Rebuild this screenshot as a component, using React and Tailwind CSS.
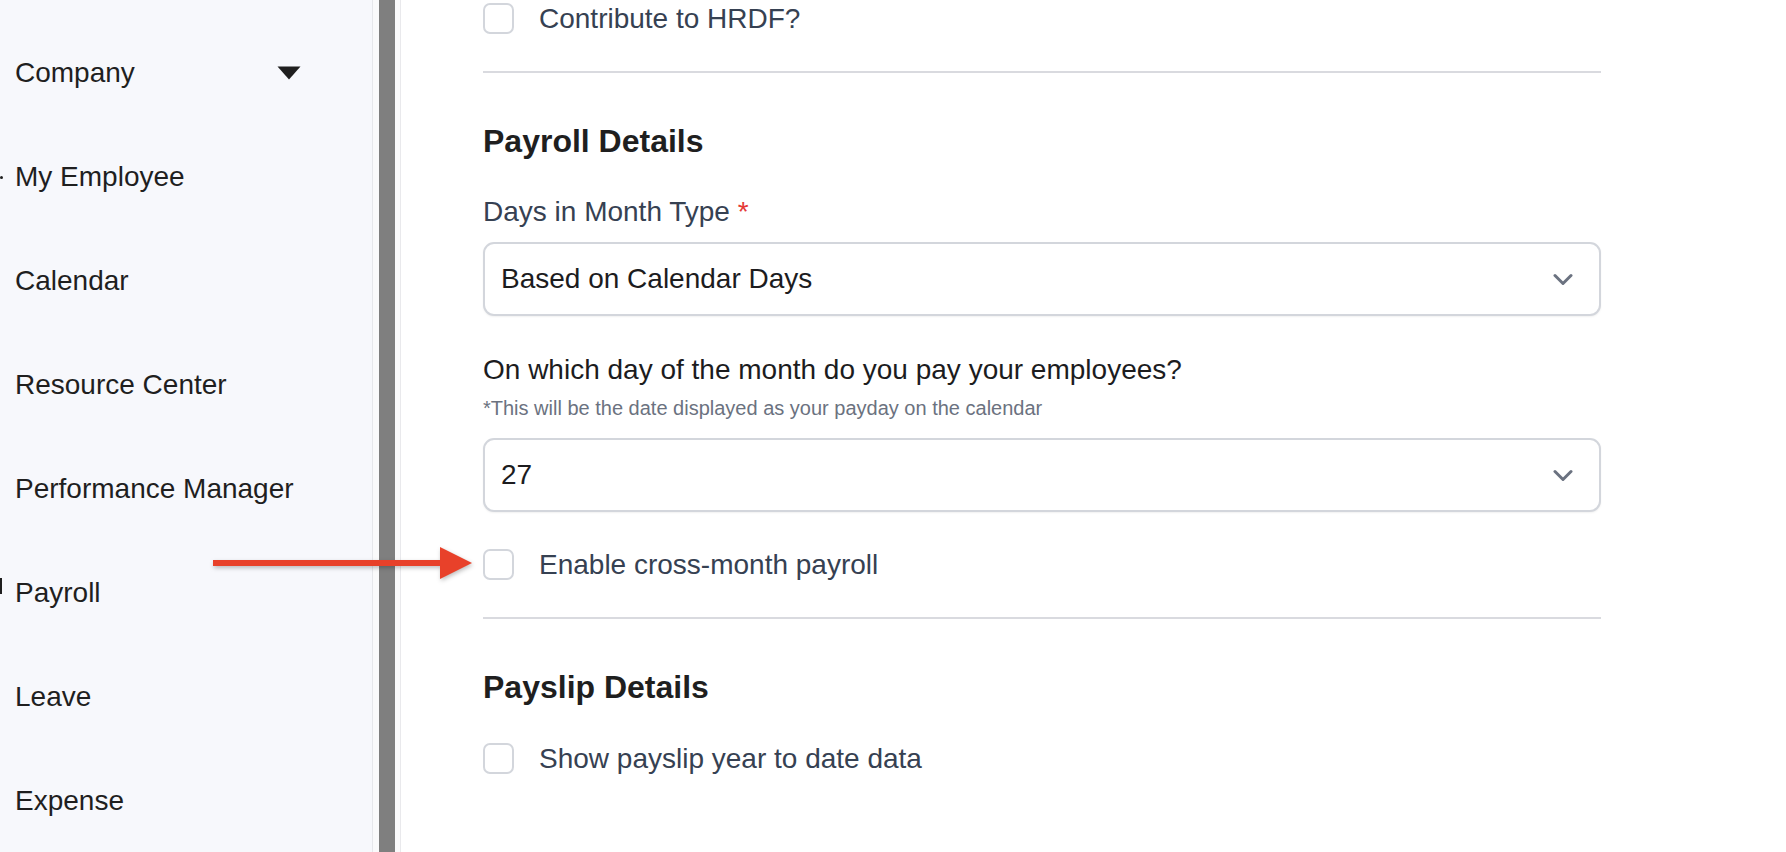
import React from 'react';

const NAV_ITEMS = [
  { label: 'Company', caret: true },
  { label: 'My Employee', mark: 'dot' },
  { label: 'Calendar' },
  { label: 'Resource Center' },
  { label: 'Performance Manager' },
  { label: 'Payroll', mark: 'bar' },
  { label: 'Leave' },
  { label: 'Expense' },
];

function Checkbox({ label, className = '' }) {
  return (
    <label className={`flex items-center gap-[25px] ${className}`}>
      <span className="block w-[31px] h-[31px] rounded-[7px] border-2 border-[#d3d6dc] bg-white shrink-0" />
      <span className="text-[28px] leading-[31px] text-[#364152]">{label}</span>
    </label>
  );
}

function SelectBox({ value, className = '' }) {
  return (
    <div
      className={`flex items-center justify-between h-[74px] rounded-[11px] border-2 border-[#d3d6dc] bg-white shadow-[0_1px_2px_rgba(0,0,0,0.06)] pl-[16px] pr-[26px] ${className}`}
    >
      <span className="text-[28px] leading-[32px] text-[#1c1c1e]">{value}</span>
      <svg width="20" height="13" viewBox="0 0 20 13" fill="none">
        <path d="M2 2.5 L10 10.5 L18 2.5" stroke="#6b7280" strokeWidth="3" strokeLinecap="round" strokeLinejoin="round" />
      </svg>
    </div>
  );
}

function Sidebar() {
  return (
    <aside className="w-[373px] h-full shrink-0 bg-[#f7f8fc] border-r border-[#e6e7eb] pt-[21px]">
      {NAV_ITEMS.map((item) => (
        <div key={item.label} className="h-[104px] flex items-center text-[28px] leading-[32px] text-[#1f1f1f] whitespace-nowrap">
          {item.mark === 'dot' && <span className="block w-[3px] h-[3px] rounded-full bg-[#1f1f1f] mr-[12px]" />}
          {item.mark === 'bar' && <span className="block w-[2px] h-[16px] bg-[#1f1f1f] mr-[13px] mt-[-14px]" />}
          {!item.mark && <span className="block w-[15px] shrink-0" />}
          <span className="w-[262px] shrink-0">{item.label}</span>
          {item.caret && (
            <svg width="24" height="14" viewBox="0 0 24 14">
              <path d="M0.5 0.5 H23.5 L12 13.5 Z" fill="#1f1f1f" />
            </svg>
          )}
        </div>
      ))}
    </aside>
  );
}

export default function App() {
  return (
    <div className="relative flex w-full h-[852px] overflow-hidden bg-white font-['Liberation_Sans',Arial,sans-serif]">
      <Sidebar />

      {/* scroll track */}
      <div className="w-[28px] h-full shrink-0 bg-[#fafafb] border-r border-[#e9e9ec] pl-[6px]">
        <div className="w-[16px] h-full bg-[#7f7f7f]" />
      </div>

      <main className="flex-1 pl-[82px] pt-[3px]">
        <div className="w-[1118px] flex flex-col">
          <Checkbox label="Contribute to HRDF?" />

          <div className="mt-[37px] h-[2px] bg-[#d9dadf]" />

          <h2 className="mt-[50px] text-[32px] leading-[37px] font-bold text-[#1f1f1f]">Payroll Details</h2>

          <div className="mt-[36px] text-[28px] leading-[32px] text-[#364152]">
            Days in Month Type <span className="text-[#e53935]">*</span>
          </div>
          <SelectBox value="Based on Calendar Days" className="mt-[14px]" />

          <div className="mt-[38px] text-[28px] leading-[32px] text-[#1c1c1e]">
            On which day of the month do you pay your employees?
          </div>
          <div className="mt-[10px] text-[20px] leading-[24px] text-[#6b7280]">
            *This will be the date displayed as your payday on the calendar
          </div>
          <SelectBox value="27" className="mt-[18px]" />

          <Checkbox label="Enable cross-month payroll" className="mt-[37px]" />

          <div className="mt-[37px] h-[2px] bg-[#d9dadf]" />

          <h2 className="mt-[50px] text-[32px] leading-[37px] font-bold text-[#1f1f1f]">Payslip Details</h2>

          <Checkbox label="Show payslip year to date data" className="mt-[37px]" />
        </div>
      </main>

      {/* annotation arrow */}
      <svg
        className="absolute left-[210px] top-[544px] drop-shadow-[1px_2px_2px_rgba(0,0,0,0.25)]"
        width="266"
        height="38"
        viewBox="0 0 266 38"
      >
        <rect x="3" y="16" width="230" height="6" fill="#e8412a" />
        <path d="M230 3 L262 19 L230 35 Z" fill="#e8412a" />
      </svg>
    </div>
  );
}
